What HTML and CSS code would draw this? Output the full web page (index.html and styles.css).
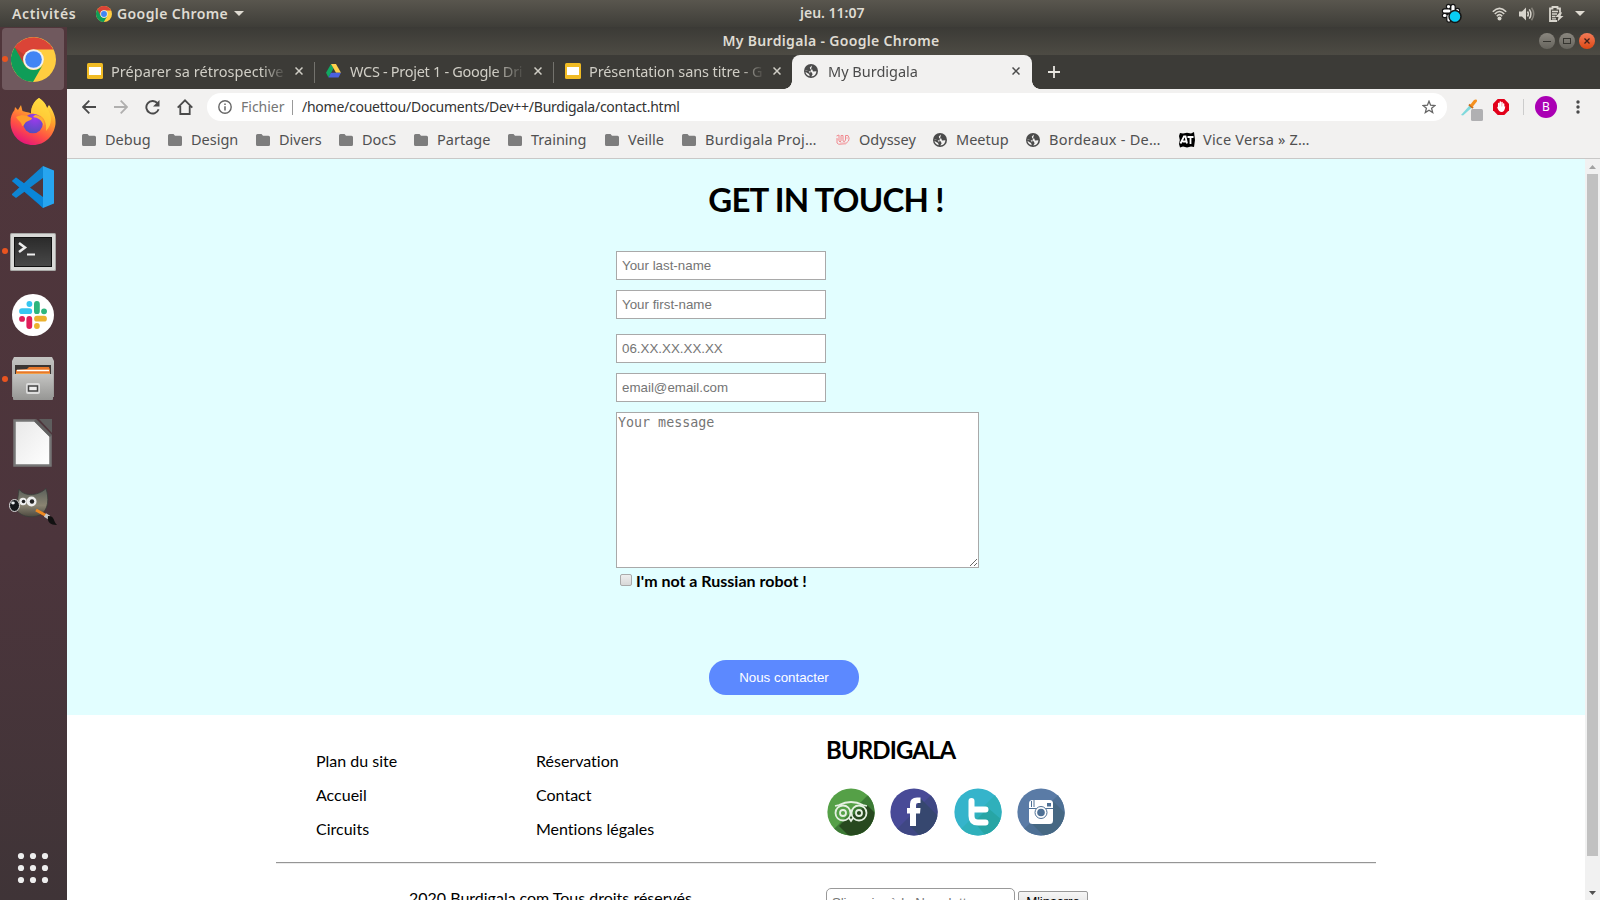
FILE: index.html
```html
<!DOCTYPE html>
<html lang="fr">
<head>
<meta charset="utf-8">
<title>My Burdigala</title>
<link rel="stylesheet" href="styles.css">
</head>
<body>
<svg class="defs" width="0" height="0">
  <defs>
    <linearGradient id="ff1" x1="0.8" y1="0" x2="0.3" y2="1"><stop offset="0" stop-color="#fff44f"/><stop offset=".35" stop-color="#ffa62b"/><stop offset=".7" stop-color="#ff4f45"/><stop offset="1" stop-color="#e3127e"/></linearGradient>
    <radialGradient id="ff2" cx=".6" cy=".2" r=".9"><stop offset="0" stop-color="#a238f0"/><stop offset="1" stop-color="#4a50b8"/></radialGradient>
    <linearGradient id="term" x1="0" y1="0" x2="0" y2="1"><stop offset="0" stop-color="#2b2b2b"/><stop offset="1" stop-color="#484848"/></linearGradient>
    <linearGradient id="metal" x1="0" y1="0" x2="0" y2="1"><stop offset="0" stop-color="#c4c4c2"/><stop offset="1" stop-color="#969694"/></linearGradient>
    <linearGradient id="paper" x1="0" y1="0" x2="1" y2="1"><stop offset="0" stop-color="#e8e8e8"/><stop offset="1" stop-color="#fff"/></linearGradient>
    <linearGradient id="fur" x1="0" y1="0" x2="0" y2="1"><stop offset="0" stop-color="#5a5f5a"/><stop offset=".6" stop-color="#8a8472"/><stop offset="1" stop-color="#4d493f"/></linearGradient>
    <symbol id="chrome" viewBox="0 0 48 48">
      <circle cx="24" cy="24" r="24" fill="#ffcd40"/>
      <path d="M3.2 12A24 24 0 0 1 45.2 13.3H24A11 11 0 0 0 14 29z" fill="#db4437"/>
      <path d="M4 11A24 24 0 0 0 23.5 48L34 29.5A11.3 11.3 0 0 1 14.3 29.5z" fill="#0f9d58"/>
      <path d="M4 11L14.3 29A11 11 0 0 1 14 19z" fill="#9c3a2a" opacity=".45"/>
      <circle cx="24" cy="24" r="11" fill="#f1f1f1"/><circle cx="24" cy="24" r="8.9" fill="#4285f4"/>
    </symbol>
    <symbol id="slides" viewBox="0 0 16 16"><rect width="16" height="16" rx="1.5" fill="#f0bb24"/><rect x="2" y="4" width="12" height="8" fill="#fff"/></symbol>
    <symbol id="folder" viewBox="0 0 14 12"><path d="M0 1.5A1.5 1.5 0 0 1 1.5 0H5.5L7 1.8H12.5A1.5 1.5 0 0 1 14 3.3V10.5A1.5 1.5 0 0 1 12.5 12H1.5A1.5 1.5 0 0 1 0 10.500z" fill="#7d7d7d"/></symbol>
    <symbol id="globe" viewBox="0 0 14 14"><circle cx="7" cy="7" r="7" fill="#4b4b4b"/><path d="M8 1.500L5.800 3.400L6.200 5.300L8.300 5.600L9 7.400L12.400 7.200A5.500 5.500 0 0 1 7.300 12.400L8.600 10.200L7.600 8.300L5.500 7.200L1.600 6.500A5.400 5.400 0 0 0 5.800 12.300L5 10L2.800 8.800L1.800 8A5.400 5.400 0 0 1 1.600 6L4.800 7.200L6 9.500z" fill="#f2f1f0"/><path d="M8 1.600L10.500 3L9.500 4.800L11.500 5.500" fill="none" stroke="#4b4b4b" stroke-width="1"/></symbol>
    <symbol id="x" viewBox="0 0 8 8"><path d="M.5.5L7.500 7.500M7.500.5L.5 7.500" stroke="currentColor" stroke-width="1.500" fill="none"/></symbol>
  </defs>
</svg>

<header class="panel">
  <span class="activities">Activités</span>
  <svg class="panel-chrome" width="16" height="16"><use href="#chrome"/></svg>
  <span class="app-name">Google Chrome</span>
  <svg class="caret" width="10" height="5"><path d="M0 0H10L5 5z" fill="#dfdbd2"/></svg>
  <span class="clock">jeu. 11:07</span>
  <div class="tray">
    <svg width="21" height="21" viewBox="0 0 21 21"><g stroke="#151515" stroke-width="5.400" stroke-linecap="round"><path d="M7.500 3.500V3.600M12 3.500V7.500M3.500 8H8M16.500 7.500V8M3.500 12.500H4M8 13V17"/></g><g stroke="#fff" stroke-width="3.200" stroke-linecap="round"><path d="M7.500 3.500V3.600M12 3.500V7.500M3.500 8H8M16.500 7.500V8M3.500 12.500H4M8 13V17"/></g><circle cx="14" cy="13.500" r="6" fill="#08cdf5" stroke="#151515" stroke-width="1.500"/></svg>
    <svg width="15" height="14" viewBox="0 0 15 14"><g fill="none" stroke="#d8d5cd" stroke-width="1.600"><path d="M.8 4.800Q7.500-2 14.200 4.800"/><path d="M2.800 7Q7.500 2 12.200 7" /><path d="M4.800 9.200Q7.500 6 10.200 9.200"/></g><circle cx="7.500" cy="11.600" r="2" fill="#d8d5cd"/></svg>
    <svg width="16" height="14" viewBox="0 0 16 14"><path d="M0 4.500H3L7 .5V13.500L3 9.500H0z" fill="#d8d5cd"/><g fill="none" stroke-width="1.500"><path d="M8.500 4.500Q10.300 7 8.500 9.500M10.300 2.300Q13.500 7 10.300 11.700" stroke="#d8d5cd"/><path d="M12.500.7Q17 7 12.500 13.300" stroke="#85827a"/></g></svg>
    <svg width="15" height="16" viewBox="0 0 15 16"><path d="M11 6.500V2.500H8.500V1H3.500V2.500H1V15H8" fill="none" stroke="#d8d5cd" stroke-width="1.800"/><path d="M3 5.500H9M3 8H8M3 10.500H6.500M3 12.800H7" stroke="#d8d5cd" stroke-width="1.300"/><path d="M11 6L6.500 11H9.500L8.500 15.500L14.500 10H11.500L13 6.500z" fill="#d8d5cd"/></svg>
    <svg width="10" height="5"><path d="M0 0H10L5 5z" fill="#dfdbd2"/></svg>
  </div>
</header>

<div class="desktop">
  <nav class="dock">
    <div class="launcher active running"><svg width="45" height="45"><use href="#chrome"/></svg></div>
    <div class="launcher firefox"><svg width="46" height="47" viewBox="0 0 46 47"><path d="M29 0C34 3 36 7 37 10C38 9 38 8 39 7C44 14 46 20 45.500 26C44 38 35 47 23 47S1 38 .5 25C.3 19 2 15 4.500 12L5 9L8 12L11 7L12.500 13L16 14C18 14 20 15 21 15.500C21 9 24 3 29 0z" fill="url(#ff1)"/><path d="M29 0C34 3 36 7 37 10C42 17 43 26 36 33C37 25 34 19 29 17L21 15C21 9 24 3 29 0z" fill="#ffd83e" opacity=".75"/><circle cx="23" cy="25.500" r="9.800" fill="url(#ff2)"/><path d="M6 19C12 16 16 17 22 20C22 22 19 22.500 16 24C14 26 14 28 12 28C12 24 8 23 6 19z" fill="#ff9e2c"/><path d="M25 17C31 17 35 22 34 28C31 21 28 20 23 19z" fill="#ffab35"/></svg></div>
    <div class="launcher"><svg width="42" height="42" viewBox="0 0 42 42"><path d="M0 15L4 11.500L31 32V42z" fill="#0a72bd"/><path d="M0 28L31 0V12L4 32L0 29z" fill="#0f86d2"/><path d="M0 15L4 11.500L31 31V42L27 38z" fill="#0a86d8"/><path d="M31 0L42 4.500V37.500L31 42z" fill="#27a5ef"/></svg></div>
    <div class="launcher running terminal"><svg width="46" height="39" viewBox="0 0 46 39"><rect width="46" height="38" rx="1.500" fill="#a8a8a6"/><rect x="1" y="1" width="44" height="36" rx="1" fill="#d9d9d7"/><rect x="4" y="4" width="38" height="30" fill="#111"/><rect x="5" y="5" width="36" height="28" fill="url(#term)"/><path d="M9 10L15 14.500L9 19" fill="none" stroke="#eee" stroke-width="2.500"/><path d="M17 21.500H25" stroke="#eee" stroke-width="2"/></svg></div>
    <div class="launcher"><svg width="42" height="42" viewBox="0 0 42 42"><circle cx="21" cy="21" r="21" fill="#fff"/><g stroke-width="5.800" stroke-linecap="round"><path d="M10 17.200H17.300M17.400 9.900V10" stroke="#36c5f0"/><path d="M24.900 10V17.200M32 17.300H32.100" stroke="#2eb67d"/><path d="M17.300 25V32M10 24.900H10.100" stroke="#e01e5a"/><path d="M25 24.700H32M24.900 32V32.100" stroke="#ecb22e"/></g></svg></div>
    <div class="launcher running"><svg width="42" height="44" viewBox="0 0 42 44"><path d="M2 0H40L42 4V40H0V4z" fill="url(#metal)"/><rect x="3" y="8" width="36" height="12" fill="#3b3634"/><path d="M4 13L15 12L17 10H37L38 13V20H4z" fill="#e8782a"/><path d="M5 13.500H37" stroke="#fff" stroke-width="1.500"/><path d="M4 16H38V20H4z" fill="#f0a04a"/><rect x="1" y="17" width="40" height="26" rx="1" fill="url(#metal)"/><rect x="14" y="26" width="14" height="11" rx="2" fill="#ddd"/><rect x="16.500" y="29" width="9" height="5" fill="#eee" stroke="#444" stroke-width="1.500"/></svg></div>
    <div class="launcher"><svg width="40" height="48" viewBox="0 0 40 48"><path d="M26 0H39V14z" fill="#5e5e5e"/><path d="M1.500 1.500H22L37.500 17V46.500H1.500z" fill="url(#paper)" stroke="#757575" stroke-width="2.500"/><path d="M22 1L38 17" stroke="#606060" stroke-width="3"/></svg></div>
    <div class="launcher"><svg class="gimp" width="48" height="38" viewBox="0 0 48 38"><path d="M10 1C14 8 28 9 37 .5C40 10 40 22 31 27C22 31 9 28 7 20C9 13 9 7 10 1z" fill="url(#fur)" stroke="#3a3d3b" stroke-width=".8"/><ellipse cx="5.500" cy="17.500" rx="5" ry="6" fill="#14181b" stroke="#ddd"/><ellipse cx="4" cy="15" rx="1.800" ry="1.400" fill="#e8edef"/><circle cx="14" cy="13.500" r="3.700" fill="#eee"/><circle cx="22.500" cy="13.500" r="5" fill="#eee"/><circle cx="14.500" cy="13.500" r="1.800" fill="#222"/><circle cx="23" cy="13.500" r="2.200" fill="#222"/><path d="M27 22L37 27.500" stroke="#f08a22" stroke-width="3"/><path d="M36 27L40 29.500" stroke="#c9c9c9" stroke-width="4"/><path d="M39 28C46 28 44 33 48 37C41 37 38 34 39 28z" fill="#111"/></svg></div>
    <svg class="apps" width="32" height="32" viewBox="0 0 32 32"><g fill="#eee"><circle cx="4" cy="4" r="3.100"/><circle cx="16" cy="4" r="3.100"/><circle cx="28" cy="4" r="3.100"/><circle cx="4" cy="16" r="3.100"/><circle cx="16" cy="16" r="3.100"/><circle cx="28" cy="16" r="3.100"/><circle cx="4" cy="28" r="3.100"/><circle cx="16" cy="28" r="3.100"/><circle cx="28" cy="28" r="3.100"/></g></svg>
  </nav>

  <div class="window">
    <div class="titlebar">
      <span class="window-title">My Burdigala - Google Chrome</span>
      <div class="controls">
        <span class="control"><svg width="16" height="16"><path d="M4 8.500H12" stroke="#35342f"/></svg></span>
        <span class="control"><svg width="16" height="16"><rect x="4.500" y="5.500" width="7" height="5" fill="none" stroke="#35342f"/></svg></span>
        <span class="control close"><svg width="16" height="16"><path d="M5.500 5.500L10.500 10.500M10.500 5.500L5.500 10.500" stroke="#40201a" stroke-width="1.300"/></svg></span>
      </div>
    </div>

    <div class="tabs">
      <div class="tab"><svg width="16" height="16"><use href="#slides"/></svg><span class="tab-title t1">Préparer sa rétrospective</span><svg class="tab-x" width="8" height="8"><use href="#x"/></svg></div>
      <div class="tab"><svg width="15" height="14" viewBox="0 0 15 14"><path d="M5 0L0 8.700L2.500 13.500L7.500 4.500z" fill="#11a861"/><path d="M5 0H10L15 8.700H10z" fill="#ffd04b"/><path d="M2.500 13.500L5 8.700H15L12.500 13.500z" fill="#4a60e0"/></svg><span class="tab-title t2">WCS - Projet 1 - Google Dri</span><svg class="tab-x" width="8" height="8"><use href="#x"/></svg></div>
      <div class="tab"><svg width="16" height="16"><use href="#slides"/></svg><span class="tab-title t3">Présentation sans titre - G</span><svg class="tab-x" width="8" height="8"><use href="#x"/></svg></div>
      <div class="tab selected"><svg width="14" height="14"><use href="#globe"/></svg><span class="tab-title t4">My Burdigala</span><svg class="tab-x" width="8" height="8"><use href="#x"/></svg></div>
      <svg class="new-tab" width="12" height="12"><path d="M6 0V12M0 6H12" stroke="#e8e6e0" stroke-width="1.800"/></svg>
    </div>

    <div class="toolbar">
      <svg class="back" width="14" height="14" viewBox="0 0 14 14"><path d="M14 7H1.500M7.300.7L1 7L7.300 13.300" fill="none" stroke="#4a4a4a" stroke-width="1.800"/></svg>
      <svg class="forward" width="14" height="14" viewBox="0 0 14 14"><path d="M0 7H12.500M6.700.7L13 7L6.700 13.300" fill="none" stroke="#b0afae" stroke-width="1.800"/></svg>
      <svg class="reload" width="15" height="15" viewBox="0 0 15 15"><path d="M12.300 3A6.300 6.300 0 1 0 13.600 9.300" fill="none" stroke="#4a4a4a" stroke-width="1.900"/><path d="M14.500 0V6.500H8z" fill="#4a4a4a"/></svg>
      <svg class="home" width="16" height="16" viewBox="0 0 16 16"><path d="M.7 8.600L8 1.300L15.300 8.600M3.300 7V15H12.700V7" fill="none" stroke="#4a4a4a" stroke-width="1.800"/></svg>
      <div class="omnibox">
        <svg width="14" height="14" viewBox="0 0 14 14"><circle cx="7" cy="7" r="6.200" fill="none" stroke="#666" stroke-width="1.400"/><path d="M7 6.200V10.500M7 3.400V5" stroke="#666" stroke-width="1.500"/></svg>
        <span class="scheme">Fichier</span><i class="divider"></i>
        <span class="url">/home/couettou/Documents/Dev++/Burdigala/contact.html</span>
        <svg class="star" width="14" height="14" viewBox="0 0 14 14"><path d="M7 1.200L8.600 5.200L13 5.500L9.600 8.300L10.700 12.600L7 10.300L3.300 12.600L4.400 8.300L1 5.500L5.400 5.200z" fill="none" stroke="#666" stroke-width="1.300"/></svg>
      </div>
      <svg class="dropper" width="23" height="22" viewBox="0 0 23 22"><path d="M1 16L10 6L12 8.500L3 16.500z" fill="#7fd9dc"/><path d="M9 5.500L13 9" stroke="#c86a1c" stroke-width="2"/><path d="M10 6L14 1C16-.5 18 1 16.500 3L12.500 8z" fill="#f5901e"/><rect x="11" y="10" width="12" height="12" rx="1.500" fill="#b0b0b2"/></svg>
      <svg class="adblock" width="16" height="16" viewBox="0 0 16 16"><path d="M4.700 0H11.300L16 4.700V11.300L11.300 16H4.700L0 11.300V4.700z" fill="#e2001a"/><path d="M5.700 4.500V9M7.300 3V8M9 3.500V8M10.600 5V9" stroke="#fff" stroke-width="1.500" stroke-linecap="round"/><path d="M5 7.500H11.300L12.300 7.500Q11.500 13 8.500 13Q6 13 4.200 8.500z" fill="#fff"/></svg>
      <i class="bar"></i>
      <span class="avatar">B</span>
      <svg class="kebab" width="4" height="14"><circle cx="2" cy="2" r="1.700" fill="#4a4a4a"/><circle cx="2" cy="7" r="1.700" fill="#4a4a4a"/><circle cx="2" cy="12" r="1.700" fill="#4a4a4a"/></svg>
    </div>

    <div class="bookmarks">
      <span class="bookmark"><svg width="14" height="12"><use href="#folder"/></svg>Debug</span>
      <span class="bookmark"><svg width="14" height="12"><use href="#folder"/></svg>Design</span>
      <span class="bookmark"><svg width="14" height="12"><use href="#folder"/></svg>Divers</span>
      <span class="bookmark"><svg width="14" height="12"><use href="#folder"/></svg>DocS</span>
      <span class="bookmark"><svg width="14" height="12"><use href="#folder"/></svg>Partage</span>
      <span class="bookmark"><svg width="14" height="12"><use href="#folder"/></svg>Training</span>
      <span class="bookmark"><svg width="14" height="12"><use href="#folder"/></svg>Veille</span>
      <span class="bookmark wide"><svg width="14" height="12"><use href="#folder"/></svg>Burdigala Proj…</span>
      <span class="bookmark"><svg width="14" height="12" viewBox="0 0 14 12"><path d="M.5 2L3 1V7Q4 9 5 7V1.500H7V7Q8.500 9 9.500 6V1.500H12Q14 4 12.500 7Q10 11 6 10Q2 11 1 9L1 4" fill="none" stroke="#f08a90"/><path d="M1 5.500H3M5 4H7M10 4H12.500M4 9H10" stroke="#f5b0b4"/></svg>Odyssey</span>
      <span class="bookmark"><svg width="14" height="14"><use href="#globe"/></svg>Meetup</span>
      <span class="bookmark wide"><svg width="14" height="14"><use href="#globe"/></svg>Bordeaux - De…</span>
      <span class="bookmark last"><svg width="16" height="16" viewBox="0 0 16 16"><path d="M1 1L4 1.500L8 .8L12 1.500L15 0L15.500 4L16 8L15 15L12 14.500L8 15.500L4 14.500L1 15.500L0 12L.8 8L0 4z" fill="#000"/><path d="M1.500 11.500L5 4.500H6.500L8 11.500M3.500 9.500H7M8.500 5H14.500M11.500 5V12" fill="none" stroke="#fff" stroke-width="1.800"/></svg>Vice Versa » Z…</span>
    </div>

    <div class="viewport">
      <main class="page">
        <section class="contact">
          <h1>GET IN TOUCH !</h1>
          <form class="form">
            <input class="field" type="text" placeholder="Your last-name">
            <input class="field" type="text" placeholder="Your first-name">
            <input class="field phone" type="text" placeholder="06.XX.XX.XX.XX">
            <input class="field" type="text" placeholder="email@email.com">
            <textarea class="message" placeholder="Your message"></textarea>
            <label class="robot"><input class="check" type="checkbox">I'm not a Russian robot !</label>
            <button class="submit" type="button">Nous contacter</button>
          </form>
        </section>
        <footer class="footer">
          <div class="footer-top">
            <ul class="links"><li>Plan du site</li><li>Accueil</li><li>Circuits</li></ul>
            <ul class="links"><li>Réservation</li><li>Contact</li><li>Mentions légales</li></ul>
            <div class="brand">
              <h2>BURDIGALA</h2>
              <div class="social">
                <svg width="48" height="48" viewBox="0 0 48 48"><clipPath id="c"><circle cx="24" cy="24" r="23.600"/></clipPath><g clip-path="url(#c)"><path d="M0 0H48V48H0z" fill="#55a047"/><path d="M0 48L40 8H48V48z" fill="#3c7a35"/><path d="M16 34L40 17L48 25V48H22L12 38z" fill="#27491f"/></g><g fill="none" stroke="#e5f0e2" stroke-width="1.800"><circle cx="16" cy="25" r="7.500"/><circle cx="32" cy="25" r="7.500"/><circle cx="16" cy="25" r="3"/><circle cx="32" cy="25" r="3"/><path d="M8 18L12 17Q24 11 36 17L40 18M22 30L24 33L26 30"/></g></svg>
                <svg width="48" height="48" viewBox="0 0 48 48"><g clip-path="url(#c)"><path d="M0 0H48V48H0z" fill="#484a97"/><path d="M0 48L40 8H48V48z" fill="#3f4784"/><path d="M30 10L48 28V48H30L20 38z" fill="#36476f"/></g><path d="M20 38V25.500H17V20H20V16Q20 9.500 27 9.500H30.500V15H28Q26 15 26 17V20H30.500L30 25.500H26V38z" fill="#fff"/></svg>
                <svg width="48" height="48" viewBox="0 0 48 48"><g clip-path="url(#c)"><path d="M0 0H48V48H0z" fill="#35b4cb"/><path d="M0 48L48 0V48z" fill="#2fb0bb"/><path d="M20 34L34 20L48 32V48H32z" fill="#27a5a5"/></g><path d="M17.500 13V28Q17.500 34.500 24 34.500H31.500M18 21.500H31.500" fill="none" stroke="#fff" stroke-width="6" stroke-linecap="round"/></svg>
                <svg width="48" height="48" viewBox="0 0 48 48"><g clip-path="url(#c)"><path d="M0 0H48V48H0z" fill="#5a7ba6"/><path d="M0 48L48 0V48z" fill="#4e7095"/><path d="M14 35L36 13L48 25V48H27z" fill="#466883"/></g><rect x="12" y="12" width="24" height="24" rx="3.500" fill="#fff"/><path d="M12 20.500H36M14.500 13V19M17 12V19" stroke="#4e7095"/><rect x="30" y="15" width="4" height="3.500" fill="#4e7095"/><circle cx="24" cy="24.500" r="6" fill="#fff" stroke="#4e7095" stroke-width="1"/><circle cx="24" cy="24.500" r="3.800" fill="#4e7095"/></svg>
              </div>
            </div>
          </div>
          <hr class="rule">
          <div class="footer-bottom">
            <p class="copyright">2020 Burdigala.com Tous droits réservés</p>
            <input class="newsletter" type="text" placeholder="S'inscrire à la Newsletter">
            <button class="subscribe" type="button">M'inscrre</button>
          </div>
        </footer>
      </main>
      <div class="scrollbar">
        <svg width="7" height="4"><path d="M0 4L3.500 0L7 4z" fill="#a3a3a3"/></svg>
        <div class="thumb"></div>
        <svg class="down" width="7" height="4"><path d="M0 0H7L3.500 4z" fill="#505050"/></svg>
      </div>
    </div>
  </div>
</div>
</body>
</html>
```
FILE: styles.css
```css
* { box-sizing: border-box; }
body {
  margin: 0;
  width: 1600px;
  height: 900px;
  overflow: hidden;
  display: flex;
  flex-direction: column;
  font-family: "Noto Sans", "Open Sans", sans-serif;
  background: #3c3b37;
}
svg { display: block; flex: none; }
.defs { position: absolute; }
span { white-space: nowrap; }

/* Top panel */
.panel {
  height: 27px;
  flex: none;
  display: grid;
  grid-template-columns: 84px 21px 117px 10px 1fr auto;
  align-items: center;
  padding: 0 15px 0 12px;
  background: linear-gradient(#59564e, #3e3d38);
  color: #dfdbd2;
  font-size: 14px;
  font-weight: 600;
}
.activities { letter-spacing: .65px; }
.app-name { letter-spacing: .4px; }
.clock { padding-left: 556px; line-height: 18px; padding-bottom: 1px; }
.tray { display: flex; align-items: center; }
.tray svg { margin-left: 14px; }
.tray svg:nth-child(2) { margin-left: 30px; }
.tray svg:nth-child(3) { margin-left: 12px; }
.tray svg:nth-child(5) { margin-left: 11px; }

.desktop { flex: 1; min-height: 0; display: flex; }

/* Dock */
.dock {
  width: 67px;
  flex: none;
  display: flex;
  flex-direction: column;
  background: linear-gradient(#50363b, #4c353c 60%, #3f3437);
}
.launcher {
  position: relative;
  height: 64px;
  padding-right: 1px;
  display: flex;
  align-items: center;
  justify-content: center;
}
.launcher.active { width: 62px; height: 62px; margin: 1px 0 1px 2px; padding: 0; border-radius: 4px; background: #70595e; }
.launcher.running::before {
  content: "";
  position: absolute;
  left: 2px;
  top: 29px;
  width: 6px;
  height: 6px;
  border-radius: 50%;
  background: #e95420;
}
.launcher.active::before { left: 0; top: 28px; }
.firefox { padding-bottom: 3px; }
.terminal { padding-top: 3px; }
.apps { margin: auto 0 16px 17px; }

/* Browser window */
.window { flex: 1; min-width: 0; display: flex; flex-direction: column; }
.titlebar {
  height: 28px;
  flex: none;
  display: grid;
  grid-template-columns: 1fr auto 1fr;
  align-items: center;
  background: linear-gradient(#3b3a36, #4d4b44);
  padding-right: 5px;
}
.window-title { grid-column: 2; padding-bottom: 2px; color: #dfdbd2; font-size: 14px; font-weight: 600; letter-spacing: .33px; }
.controls { display: flex; gap: 4px; justify-self: end; }
.control { width: 16px; height: 16px; border-radius: 50%; background: linear-gradient(#8a877f, #66645d); }
.control.close { background: linear-gradient(#f47b58, #dd4814); }

.tabs { height: 34px; flex: none; display: flex; padding-left: 8px; background: #3c3b37; color: #d0cec6; }
.tab { width: 239px; height: 34px; display: flex; align-items: center; padding: 0 11px 2px 12px; position: relative; }
.tab:nth-child(-n+2)::after { content: ""; position: absolute; right: -1px; top: 7px; width: 1px; height: 21px; background: #73726d; }
.tab-title {
  width: 176px;
  margin-left: 8px;
  margin-right: auto;
  padding-bottom: 1px;
  font-size: 14.5px;
  mask-image: linear-gradient(90deg, #000 86%, transparent);
}
.t1 { letter-spacing: .05px; }
.t2 { letter-spacing: -.3px; margin-left: 9px; mask-image: linear-gradient(90deg, #000 82%, transparent); }
.t3 { letter-spacing: -.1px; }
.t4 { margin-left: 10px; }
.tab.selected { width: 240px; padding-right: 12px; background: #f2f1f0; color: #4b4b4b; border-radius: 8px 8px 0 0; }
.tab.selected::before, .tab.selected::after {
  content: "";
  position: absolute;
  bottom: 0;
  left: -8px;
  top: auto;
  width: 8px;
  height: 8px;
  background: radial-gradient(circle at 0 0, #3c3b37 7.5px, #f2f1f0 8px);
}
.tab.selected::after { left: auto; right: -8px; background: radial-gradient(circle at 100% 0, #3c3b37 7.5px, #f2f1f0 8px); }
.new-tab { margin: 11px 0 0 16px; }

.toolbar { height: 36px; flex: none; display: flex; align-items: center; padding: 0 20px 0 15px; background: #f2f1f0; }
.forward { margin-left: 18px; }
.reload { margin-left: 17px; margin-right: 1px; }
.home { margin-left: 16px; }
.omnibox {
  width: 1240px;
  height: 28px;
  margin-left: 14px;
  padding: 0 11px;
  display: flex;
  align-items: center;
  border-radius: 14px;
  background: #fff;
  font-size: 14px;
}
.scheme { width: 51px; margin-left: 9px; padding-bottom: 2px; color: #757575; }
.divider { width: 1px; height: 15px; background: #999; }
.url { margin-left: 9px; padding-bottom: 2px; color: #333; letter-spacing: -.25px; }
.star { margin-left: auto; }
.dropper { margin: 5px 0 0 13px; }
.adblock { margin-left: 10px; }
.bar { width: 1px; height: 16px; margin-left: 14px; background: #ccc; }
.avatar { width: 22px; height: 22px; margin-left: 11px; border-radius: 50%; background: #aa00b4; color: #fff; font-size: 12px; line-height: 22px; text-align: center; }
.kebab { margin-left: auto; }

.bookmarks {
  height: 34px;
  flex: none;
  display: grid;
  grid-template-columns: 86px 88px 83px 75px 94px 97px 77px 154px 97px 93px 153px 130px;
  align-items: center;
  padding: 0 0 5px 15px;
  background: #f2f1f0;
  border-bottom: 1px solid #c9c8c7;
  color: #505050;
  font-size: 14.5px;
  line-height: 19px;
}
.bookmark { display: flex; align-items: center; gap: 9px; }
.bookmark svg { margin-top: 1px; }
.bookmark.wide { letter-spacing: .25px; }
.bookmark.last { gap: 8px; letter-spacing: .2px; }

/* Viewport */
.viewport { flex: 1; min-height: 0; display: flex; background: #fff; }
.page { flex: 1; overflow: hidden; font-family: Lato, sans-serif; font-size: 16px; font-variant-ligatures: none; color: #000; }
.contact { height: 556px; background: #e2feff; overflow: hidden; }
h1 { margin: 20px 0 32px; font-size: 33px; line-height: 40px; text-align: center; letter-spacing: -.8px; }
.form { display: flex; flex-direction: column; align-items: flex-start; width: 420px; margin-left: 549px; }
.field {
  width: 210px;
  height: 29px;
  margin-bottom: 10px;
  padding: 1px 5px;
  border: 1px solid #a9a9a9;
  background: #fff;
  font: 13.333px "Liberation Sans", sans-serif;
}
.field.phone { margin-top: 5px; }
::placeholder { color: #757575; opacity: 1; }
.message { width: 363px; height: 156px; padding: 2px 1px; border: 1px solid #a9a9a9; font: 13.333px "DejaVu Sans Mono", monospace; }
.robot { display: flex; align-items: center; gap: 4px; height: 20px; margin: 2px 0 0 4px; font-weight: bold; }
.check { appearance: none; width: 12px; height: 12px; margin: 0; border: 1px solid #aaa; border-radius: 2px; background: linear-gradient(#eee, #d8d8d8); }
.submit { width: 150px; height: 35px; margin: 70px 0 0 93px; border: 0; border-radius: 17px; background: #5c89ff; color: #fff; font: 13.333px "Liberation Sans", sans-serif; }

.footer { width: 1100px; margin: 0 auto; }
.footer-top { height: 147px; display: grid; grid-template-columns: 220px 290px 1fr; padding-left: 40px; }
.links { margin: 29px 0 0; padding: 0; list-style: none; line-height: 34px; }
h2 { margin: 20px 0 24px; font-size: 24px; line-height: 29px; letter-spacing: -.9px; }
.social { display: flex; gap: 15.300px; margin-left: 1px; }
.rule { margin: 0; border: 0; border-top: 1px solid #959595; border-bottom: 1px solid #ebebeb; height: 2px; }
.footer-bottom { display: flex; align-items: flex-start; padding: 24px 0 0 133px; }
.copyright { width: 417px; margin: 0; line-height: 20px; }
.newsletter { width: 189px; height: 28px; padding: 1px 5px; border: 1px solid #999; border-radius: 5px; font: 13.333px "Liberation Sans", sans-serif; }
.subscribe { width: 70px; height: 21px; margin: 3px 0 0 3px; padding: 0; border: 1px solid #999; border-radius: 2px; background: linear-gradient(#f6f6f6, #ddd); font: 13.333px "Liberation Sans", sans-serif; }

.scrollbar { width: 15px; flex: none; display: flex; flex-direction: column; align-items: center; padding: 6px 0 5px; background: #f1f1f1; }
.thumb { width: 11px; height: 682px; margin-top: 5px; background: #c1c1c1; }
.down { margin-top: auto; }
```
